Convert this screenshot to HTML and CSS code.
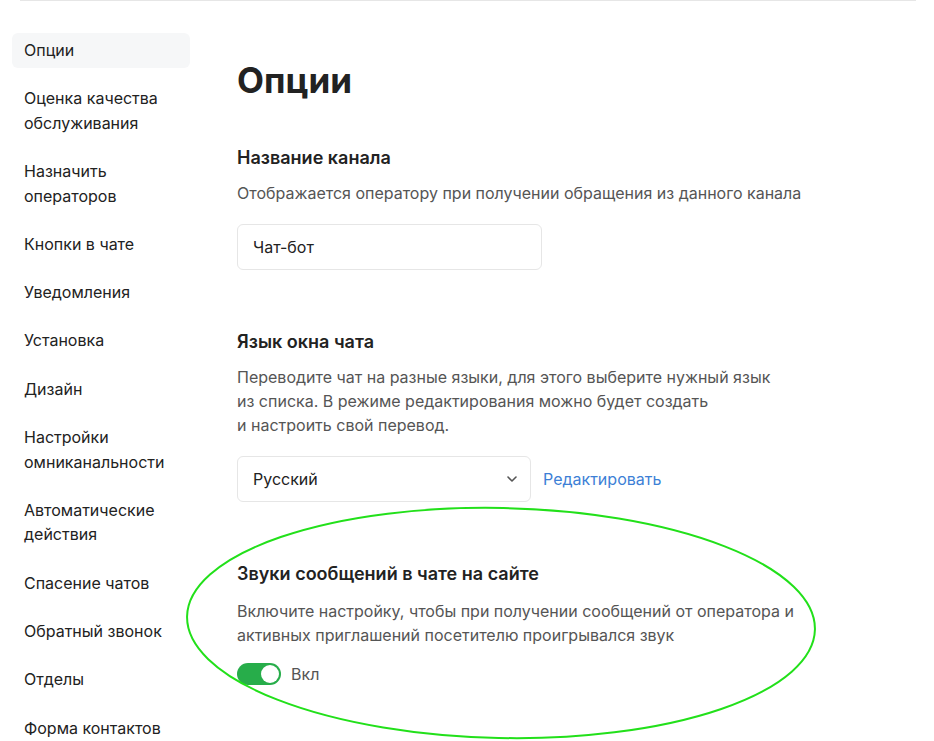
FILE: index.html
```html
<!DOCTYPE html>
<html lang="ru">
<head>
<meta charset="utf-8">
<link rel="stylesheet" href="styles.css">
</head>
<body>
<div class="topline"></div>
<div class="page">
  <nav class="side">
    <div class="item active">Опции</div>
    <div class="item">Оценка качества<br>обслуживания</div>
    <div class="item">Назначить<br>операторов</div>
    <div class="item">Кнопки в чате</div>
    <div class="item">Уведомления</div>
    <div class="item">Установка</div>
    <div class="item">Дизайн</div>
    <div class="item">Настройки<br>омниканальности</div>
    <div class="item">Автоматические<br>действия</div>
    <div class="item">Спасение чатов</div>
    <div class="item">Обратный звонок</div>
    <div class="item">Отделы</div>
    <div class="item">Форма контактов</div>
  </nav>
  <main class="main">
    <h1 class="title">Опции</h1>
    <section class="sec">
      <h2 class="h">Название канала</h2>
      <p class="desc">Отображается оператору при получении обращения из данного канала</p>
      <div class="input">Чат-бот</div>
    </section>
    <section class="sec">
      <h2 class="h">Язык окна чата</h2>
      <p class="desc">Переводите чат на разные языки, для этого выберите нужный язык<br>из списка. В режиме редактирования можно будет создать<br>и настроить свой перевод.</p>
      <div class="row">
        <div class="select">Русский
          <svg class="chev" width="12" height="8" viewBox="0 0 12 8"><path d="M2 2l4 4 4-4" fill="none" stroke="#555" stroke-width="1.6" stroke-linecap="round" stroke-linejoin="round"/></svg>
        </div>
        <a class="link">Редактировать</a>
      </div>
    </section>
    <section class="sec">
      <h2 class="h">Звуки сообщений в чате на сайте</h2>
      <p class="desc desc2">Включите настройку, чтобы при получении сообщений от оператора и<br>активных приглашений посетителю проигрывался звук</p>
      <div class="toggle-row">
        <span class="toggle"><span class="knob"></span></span>
        <span class="tlabel">Вкл</span>
      </div>
    </section>
  </main>
</div>
<svg class="ellipse" width="934" height="741" viewBox="0 0 934 741">
  <ellipse cx="501" cy="623" rx="314" ry="115" fill="none" stroke="#22e01a" stroke-width="2" transform="rotate(1.2 501 623)"/>
</svg>
</body>
</html>
```
FILE: styles.css
```css
* { box-sizing: border-box; }
html, body { margin: 0; padding: 0; background: #fff; }
body {
  font-family: Inter, "Noto Sans", sans-serif;
  color: #222;
  width: 934px;
  height: 741px;
  overflow: hidden;
  position: relative;
}
.topline {
  height: 1px;
  margin: 0 18px 0 20px;
  background: #e6e6e6;
}
.page {
  display: flex;
  padding-top: 32px;
}
.side {
  width: 178px;
  margin-left: 12px;
  display: flex;
  flex-direction: column;
  gap: 13.8px;
}
.item {
  padding: 5px 12px;
  font-size: 16px;
  line-height: 24.5px;
  color: #222;
  border-radius: 6px;
}
.item.active { background: #f6f7f8; }
.main {
  margin-left: 47px;
  flex: 1;
}
.title {
  font-size: 35px;
  font-weight: 700;
  margin: 26px 0 0;
  line-height: 42px;
  color: #222;
}
.sec { margin-top: 46px; }
.sec + .sec { margin-top: 61px; }
.h {
  font-size: 18px;
  font-weight: 600;
  margin: 0;
  line-height: 22px;
  color: #222;
}
.desc {
  font-size: 16px;
  line-height: 24px;
  color: #555;
  margin: 12px 0 0;
}
.desc2 { margin-top: 15px; line-height: 23.5px; }
.input, .select {
  margin-top: 19px;
  height: 46px;
  border: 1px solid #e6e6e6;
  border-radius: 6px;
  font-size: 16px;
  display: flex;
  align-items: center;
  padding: 0 15px;
  color: #222;
}
.input { width: 305px; }
.row {
  display: flex;
  align-items: flex-end;
  gap: 12px;
  margin-top: 19px;
}
.row .select { margin-top: 0; }
.select {
  width: 294px;
  justify-content: space-between;
  padding-right: 12px;
}
.link {
  color: #3d7fd6;
  font-size: 16px;
  line-height: 46px;
}
.toggle-row {
  display: flex;
  align-items: center;
  gap: 10px;
  margin-top: 16px;
}
.toggle {
  width: 44px;
  height: 22px;
  border-radius: 11px;
  background: #27ad4a;
  display: flex;
  justify-content: flex-end;
  align-items: center;
  padding: 2px;
}
.knob {
  width: 18px;
  height: 18px;
  border-radius: 50%;
  background: #fff;
}
.tlabel { font-size: 16px; color: #555; }
.ellipse {
  position: absolute;
  left: 0;
  top: 0;
  pointer-events: none;
}
```
